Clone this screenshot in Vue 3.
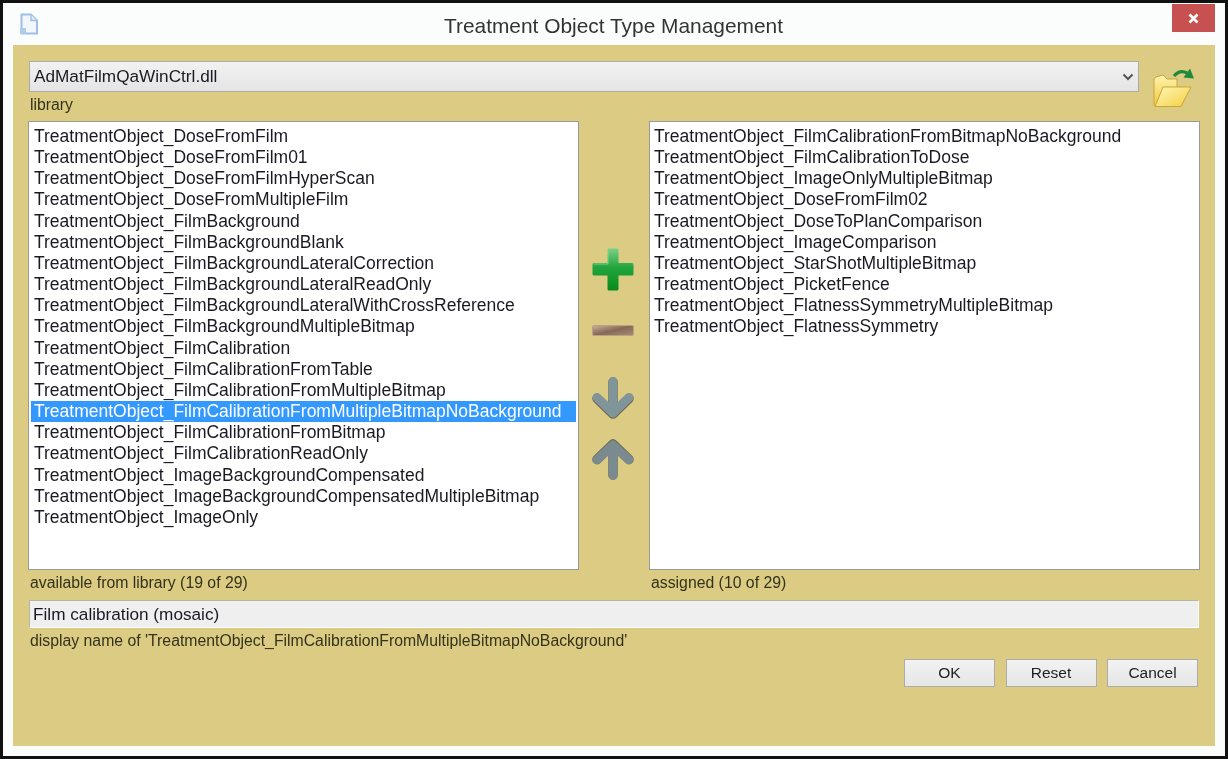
<script setup>
const left = ['DoseFromFilm','DoseFromFilm01','DoseFromFilmHyperScan','DoseFromMultipleFilm','FilmBackground','FilmBackgroundBlank','FilmBackgroundLateralCorrection','FilmBackgroundLateralReadOnly','FilmBackgroundLateralWithCrossReference','FilmBackgroundMultipleBitmap','FilmCalibration','FilmCalibrationFromTable','FilmCalibrationFromMultipleBitmap','FilmCalibrationFromMultipleBitmapNoBackground','FilmCalibrationFromBitmap','FilmCalibrationReadOnly','ImageBackgroundCompensated','ImageBackgroundCompensatedMultipleBitmap','ImageOnly'].map(s => 'TreatmentObject_' + s)
const right = ['FilmCalibrationFromBitmapNoBackground','FilmCalibrationToDose','ImageOnlyMultipleBitmap','DoseFromFilm02','DoseToPlanComparison','ImageComparison','StarShotMultipleBitmap','PicketFence','FlatnessSymmetryMultipleBitmap','FlatnessSymmetry'].map(s => 'TreatmentObject_' + s)
const selected = 'TreatmentObject_FilmCalibrationFromMultipleBitmapNoBackground'
</script>

<template>
  <div class="window">
    <header class="titlebar">
      <svg class="appicon" width="20" height="22" viewBox="0 0 20 22">
        <path d="M2.5 1.5H12L18 7.500V20.5H2.5Z" fill="#f3f7fb" stroke="#9dc0e4" stroke-width="2"/>
        <path d="M12 1.5V7.500H18" fill="#dbe8f5" stroke="#9dc0e4" stroke-width="1.4"/>
        <path d="M1 15H7V21H1Z" fill="#aecde9"/>
      </svg>
      <div class="title">Treatment Object Type Management</div>
      <div class="close">
        <svg width="11" height="11" viewBox="0 0 11 11"><path d="M1.5 1.5L9.5 9.5M9.5 1.5L1.5 9.5" stroke="#fff" stroke-width="2.6"/></svg>
      </div>
    </header>
    <main class="content">
      <div class="toprow">
        <div class="combo">
          <span>AdMatFilmQaWinCtrl.dll</span>
          <svg width="12" height="8" viewBox="0 0 12 8"><path d="M1.5 1.5L6 6L10.5 1.5" fill="none" stroke="#555" stroke-width="2"/></svg>
        </div>
        <svg class="folder" width="42" height="41" viewBox="0 0 42 41">
          <defs>
            <linearGradient id="fb" x1="0" y1="0" x2="0" y2="1"><stop offset="0" stop-color="#fff3b0"/><stop offset="1" stop-color="#efc93c"/></linearGradient>
            <linearGradient id="ff" x1="0" y1="0" x2="1" y2="1"><stop offset="0" stop-color="#fff7ba"/><stop offset="1" stop-color="#f3cf3f"/></linearGradient>
          </defs>
          <path d="M1 13Q1 11 3 10L10 8L14 12H24V39H3Q1 39 1 37Z" fill="url(#fb)" stroke="#c9a636" stroke-width="1"/>
          <path d="M10 20H38L28 39.500H2Z" fill="url(#ff)" stroke="#c9a636" stroke-width="1"/>
          <path d="M21 9Q27 2 34 6" fill="none" stroke="#1f8a3c" stroke-width="3.2"/>
          <path d="M30.500 10.500L41 11.500L37 1.500Z" fill="#1f8a3c"/>
        </svg>
      </div>
      <div class="label lib">library</div>

      <div class="lists">
        <div class="col">
          <ul class="list">
            <li v-for="it in left" :key="it" :class="{ sel: it === selected }">{{ it }}</li>
          </ul>
          <div class="label cap">available from library (19 of 29)</div>
        </div>
        <div class="tools">
          <svg width="42" height="43" viewBox="0 0 42 43" class="t-plus">
            <defs>
              <linearGradient id="gp" x1="0" y1="0" x2="0" y2="1"><stop offset="0" stop-color="#7bd088"/><stop offset="0.45" stop-color="#22a53d"/><stop offset="1" stop-color="#078a1b"/></linearGradient>
            </defs>
            <path d="M15.500 2Q15.500 0.500 17 0.500H25Q26.500 0.500 26.500 2V15H40Q41.500 15 41.500 17V26Q41.500 27.500 40 27.500H26.500V41Q26.500 42.500 25 42.500H17Q15.500 42.500 15.500 41V27.500H2Q0.500 27.500 0.500 26V17Q0.500 15 2 15H15.500Z" fill="url(#gp)"/>
            <path d="M2 16H16V3" fill="none" stroke="#a6e0ae" stroke-width="1" opacity="0.6"/>
          </svg>
          <svg width="42" height="11" viewBox="0 0 42 11" class="t-minus">
            <defs>
              <linearGradient id="gm" x1="0" y1="0" x2="1" y2="1"><stop offset="0" stop-color="#c9b49b"/><stop offset="0.5" stop-color="#876856"/><stop offset="1" stop-color="#a88d76"/></linearGradient>
            </defs>
            <rect x="0.500" y="0.500" width="41" height="10" rx="1.500" fill="url(#gm)" stroke="#b8a182" stroke-width="1"/>
          </svg>
          <svg width="42" height="42" viewBox="0 0 42 42" class="t-down">
            <path d="M21 5V37M5 21.500L21 37L37 21.500" fill="none" stroke="#6a6650" stroke-width="9.500" stroke-linecap="round" stroke-linejoin="round"/>
            <path d="M21 4.500V36M5 20.500L21 36L37 20.500" fill="none" stroke="#7f9599" stroke-width="9" stroke-linecap="round" stroke-linejoin="round"/>
          </svg>
          <svg width="42" height="42" viewBox="0 0 42 42" class="t-up">
            <path d="M21 37V6M5 21.500L21 6L37 21.500" fill="none" stroke="#6a6a5c" stroke-width="9.500" stroke-linecap="round" stroke-linejoin="round"/>
            <path d="M21 37.500V7M5 22L21 7L37 22" fill="none" stroke="#7a8a8e" stroke-width="9" stroke-linecap="round" stroke-linejoin="round"/>
          </svg>
        </div>
        <div class="col">
          <ul class="list second">
            <li v-for="it in right" :key="it">{{ it }}</li>
          </ul>
          <div class="label cap">assigned (10 of 29)</div>
        </div>
      </div>

      <div class="display">Film calibration (mosaic)</div>
      <div class="label dn">display name of 'TreatmentObject_FilmCalibrationFromMultipleBitmapNoBackground'</div>

      <div class="buttons">
        <button>OK</button>
        <button>Reset</button>
        <button>Cancel</button>
      </div>
    </main>
  </div>
</template>

<style>
html, body { margin: 0; background: #111; }
</style>

<style scoped>
.window {
  box-sizing: border-box;
  width: 1222px;
  height: 753px;
  margin: 3px 3px 0 3px;
  background: #fbfcfc;
  padding: 0 10px 10px 10px;
  display: flex;
  flex-direction: column;
  font-family: "Liberation Sans", Arial, sans-serif;
  color: #1a1a24;
  filter: blur(0.35px);
}
.titlebar {
  height: 42px;
  flex: none;
  display: flex;
  align-items: flex-start;
  position: relative;
}
.appicon { margin: 10px 0 0 6px; }
.title {
  position: absolute;
  left: 0;
  right: 1px;
  top: 12px;
  text-align: center;
  font-size: 20.9px;
  line-height: 22px;
  color: #333;
}
.close {
  position: absolute;
  right: 0;
  top: 1px;
  width: 43px;
  height: 28px;
  background: #c75050;
  display: flex;
  align-items: center;
  justify-content: center;
}
.content {
  flex: 1;
  background: #dccb83;
  padding: 16px 16px 0 15px;
  display: flex;
  flex-direction: column;
  min-height: 0;
}
.toprow {
  display: flex;
  align-items: flex-start;
  height: 31px;
}
.combo {
  box-sizing: border-box;
  width: 1110px;
  margin-left: 1px;
  height: 31px;
  border: 1px solid #ababab;
  background: linear-gradient(#f2f2f2, #e4e4e4);
  display: flex;
  align-items: center;
  justify-content: space-between;
  padding: 0 4px 0 4px;
  font-size: 17.2px;
}
.folder { margin: 6px 0 0 14px; }
.label {
  font-size: 15.8px;
  line-height: 18px;
  color: #33331c;
  margin-left: 2px;
}
.lib { margin-top: 4px; }
.lists {
  display: flex;
  margin-top: 7px;
}
.col { width: 551px; flex: none; }
.list {
  box-sizing: border-box;
  height: 449px;
  margin: 0;
  padding: 4px 2px;
  list-style: none;
  background: #fff;
  border: 1px solid #9a9a9a;
  font-size: 17.5px;
}
.list li {
  height: 21.17px;
  line-height: 21px;
  padding-left: 3px;
  white-space: nowrap;
}
.list.second li { padding-left: 2px; }
.list li.sel { background: #3399ff; color: #fff; }
.cap { margin-top: 4px; }
.tools {
  width: 70px;
  flex: none;
  display: flex;
  flex-direction: column;
  align-items: center;
  padding-right: 2px;
  box-sizing: border-box;
}
.t-plus { margin-top: 127px; }
.t-minus { margin-top: 34px; }
.t-down { margin-top: 41px; }
.t-up { margin-top: 19px; }
.display {
  box-sizing: border-box;
  height: 28px;
  margin-top: 8px;
  margin-left: 1px;
  border: 1px solid;
  border-color: #b5b5a5 #fff #fff #b5b5a5;
  background: #efefef;
  font-size: 17.2px;
  line-height: 26px;
  padding-left: 3px;
}
.dn { margin-top: 4px; }
.buttons {
  display: flex;
  justify-content: flex-end;
  gap: 10.5px;
  margin-top: 9px;
  margin-right: 1px;
}
.buttons button {
  box-sizing: border-box;
  width: 91px;
  height: 28px;
  border: 1px solid #acacac;
  background: linear-gradient(#f2f2f2, #e6e6e6);
  font: 15.5px "Liberation Sans", Arial, sans-serif;
  color: #222;
  padding: 0;
}
</style>
